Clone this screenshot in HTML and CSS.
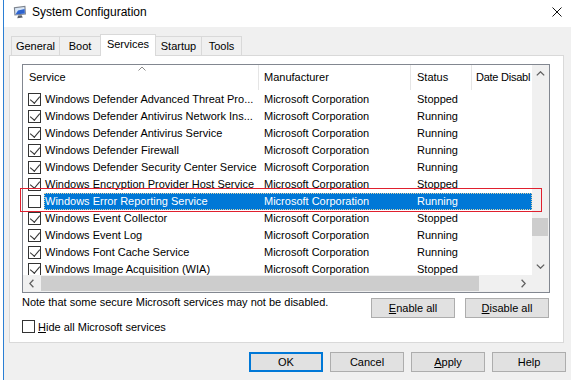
FILE: index.html
```html
<!DOCTYPE html>
<html>
<head>
<meta charset="utf-8">
<title>System Configuration</title>
<link rel="stylesheet" href="styles.css">
</head>
<body>
<div class="screen">
  <div class="behind"></div>
  <div class="dialog">
    <div class="titlebar">
      <svg class="appicon" width="14" height="14" viewBox="0 0 14 14">
        <path d="M0.8 2.2 L12.4 0.8 L13 9.4 L1.4 10.6 Z" fill="#7d838d"/>
        <path d="M2 3.2 L11.4 2.1 L11.8 8.4 L2.4 9.4 Z" fill="#d8e6f6"/>
        <path d="M5 5.5 L11.6 4 L11.8 8.4 L2.4 9.4 Z" fill="#2f64cf"/>
        <path d="M5.2 10.6 L8.6 10.2 L9.8 12.6 L4.2 13.2 Z" fill="#5b6068"/>
      </svg>
      <span class="title">System Configuration</span>
      <svg class="close" width="10" height="10" viewBox="0 0 10 10">
        <path d="M0.5 0.5 L9.5 9.5 M9.5 0.5 L0.5 9.5" stroke="#111" stroke-width="1" fill="none"/>
      </svg>
    </div>

    <div class="tabs">
      <div class="tab t-general">General</div>
      <div class="tab t-boot">Boot</div>
      <div class="tab t-services active">Services</div>
      <div class="tab t-startup">Startup</div>
      <div class="tab t-tools">Tools</div>
    </div>

    <div class="panel">
      <div class="listview">
        <div class="lv-main">
          <div class="lv-header">
            <div class="hcell h1">Service</div>
            <div class="hcell h2">Manufacturer</div>
            <div class="hcell h3">Status</div>
            <div class="hcell h4">Date Disabl</div>
            <svg class="sort" width="8" height="5" viewBox="0 0 8 5"><polyline points="0.5,4.5 4,1 7.5,4.5" fill="none" stroke="#8a8a8a" stroke-width="1"/></svg>
          </div>
          <div class="lv-rows">
            <div class="row"><div class="chk-cell"><span class="chk on"></span></div><div class="cells"><span class="s1">Windows Defender Advanced Threat Pro...</span><span class="s2">Microsoft Corporation</span><span class="s3">Stopped</span></div></div>
            <div class="row"><div class="chk-cell"><span class="chk on"></span></div><div class="cells"><span class="s1">Windows Defender Antivirus Network Ins...</span><span class="s2">Microsoft Corporation</span><span class="s3">Running</span></div></div>
            <div class="row"><div class="chk-cell"><span class="chk on"></span></div><div class="cells"><span class="s1">Windows Defender Antivirus Service</span><span class="s2">Microsoft Corporation</span><span class="s3">Running</span></div></div>
            <div class="row"><div class="chk-cell"><span class="chk on"></span></div><div class="cells"><span class="s1">Windows Defender Firewall</span><span class="s2">Microsoft Corporation</span><span class="s3">Running</span></div></div>
            <div class="row"><div class="chk-cell"><span class="chk on"></span></div><div class="cells"><span class="s1">Windows Defender Security Center Service</span><span class="s2">Microsoft Corporation</span><span class="s3">Running</span></div></div>
            <div class="row"><div class="chk-cell"><span class="chk on"></span></div><div class="cells"><span class="s1">Windows Encryption Provider Host Service</span><span class="s2">Microsoft Corporation</span><span class="s3">Stopped</span></div></div>
            <div class="row"><div class="chk-cell"><span class="chk"></span></div><div class="cells sel"><span class="s1">Windows Error Reporting Service</span><span class="s2">Microsoft Corporation</span><span class="s3">Running</span></div></div>
            <div class="row"><div class="chk-cell"><span class="chk on"></span></div><div class="cells"><span class="s1">Windows Event Collector</span><span class="s2">Microsoft Corporation</span><span class="s3">Stopped</span></div></div>
            <div class="row"><div class="chk-cell"><span class="chk on"></span></div><div class="cells"><span class="s1">Windows Event Log</span><span class="s2">Microsoft Corporation</span><span class="s3">Running</span></div></div>
            <div class="row"><div class="chk-cell"><span class="chk on"></span></div><div class="cells"><span class="s1">Windows Font Cache Service</span><span class="s2">Microsoft Corporation</span><span class="s3">Running</span></div></div>
            <div class="row"><div class="chk-cell"><span class="chk on"></span></div><div class="cells"><span class="s1">Windows Image Acquisition (WIA)</span><span class="s2">Microsoft Corporation</span><span class="s3">Stopped</span></div></div>
          </div>
        </div>
        <div class="vscroll">
          <div class="arrow"><svg width="9" height="5" viewBox="0 0 9 5"><polyline points="0.8,4.4 4.5,0.8 8.2,4.4" fill="none" stroke="#606060" stroke-width="1.3"/></svg></div>
          <div class="vtrack"><div class="vthumb"></div></div>
          <div class="arrow"><svg width="9" height="5" viewBox="0 0 9 5"><polyline points="0.8,0.6 4.5,4.2 8.2,0.6" fill="none" stroke="#606060" stroke-width="1.3"/></svg></div>
        </div>
        <div class="hscroll">
          <div class="arrow"><svg width="5" height="9" viewBox="0 0 5 9"><polyline points="4.4,0.8 0.8,4.5 4.4,8.2" fill="none" stroke="#606060" stroke-width="1.3"/></svg></div>
          <div class="htrack"><div class="hthumb"></div></div>
          <div class="arrow"><svg width="5" height="9" viewBox="0 0 5 9"><polyline points="0.6,0.8 4.2,4.5 0.6,8.2" fill="none" stroke="#606060" stroke-width="1.3"/></svg></div>
        </div>
        <div class="corner"></div>
      </div>

      <div class="actions">
        <span class="note">Note that some secure Microsoft services may not be disabled.</span>
        <div class="act-buttons">
          <button class="btn wide"><u>E</u>nable all</button>
          <button class="btn wide"><u>D</u>isable all</button>
        </div>
      </div>

      <div class="hide-row">
        <span class="chk"></span>
        <span class="hide-label"><u>H</u>ide all Microsoft services</span>
      </div>
    </div>

    <div class="footer">
      <button class="btn dlg default">OK</button>
      <button class="btn dlg">Cancel</button>
      <button class="btn dlg"><u>A</u>pply</button>
      <button class="btn dlg">Help</button>
    </div>
  </div>
  <div class="rightgap"></div>
</div>
<div class="annot"></div>
</body>
</html>
```

FILE: styles.css
```css
* { box-sizing: border-box; }
html, body { margin: 0; padding: 0; }
body {
  width: 587px;
  height: 380px;
  overflow: hidden;
  position: relative;
  background: #ffffff;
  font-family: "Liberation Sans", Arial, sans-serif;
  font-size: 11px;
  color: #000;
}
.screen { display: flex; height: 380px; }
.behind { width: 4px; background: #fff; border-right: 1px solid #2b7fd4; }
.dialog {
  width: 567px;
  background: #f0f0f0;
  display: flex;
  flex-direction: column;
}
.rightgap { flex: 1; background: #fff; }

/* title bar */
.titlebar {
  height: 27px;
  background: #fff;
  display: flex;
  align-items: center;
  padding: 0 0 3px 9px;
}
.appicon { flex: none; }
.title { font-size: 12px; margin-left: 5px; flex: 1; color: #000; }
.close { margin-right: 9px; flex: none; }

/* tabs */
.tabs {
  height: 28px;
  display: flex;
  align-items: flex-end;
  padding-left: 7px;
}
.tab {
  height: 19px;
  line-height: 18px;
  text-align: center;
  border: 1px solid #d9d9d9;
  border-bottom: none;
  background: #f0f0f0;
  margin-left: -1px;
}
.tab:first-child { margin-left: 0; }
.t-general { width: 49px; }
.t-boot { width: 42px; }
.t-services { width: 56px; }
.t-startup { width: 47px; }
.t-tools { width: 41px; }
.tab.active {
  height: 22px;
  line-height: 19px;
  background: #fff;
  position: relative;
  z-index: 1;
  margin-bottom: -1px;
}

/* panel */
.panel {
  margin-left: 5px;
  width: 555px;
  height: 288px;
  background: #fff;
  border: 1px solid #d9d9d9;
  padding: 8px 13px 0 12px;
}

/* list view */
.listview {
  width: 528px;
  height: 229px;
  border: 1px solid #828790;
  display: grid;
  grid-template-columns: 1fr 17px;
  grid-template-rows: 1fr 17px;
}
.lv-main { overflow: hidden; position: relative; }
.lv-header { display: flex; height: 25px; position: relative; }
.hcell {
  line-height: 25px;
  white-space: nowrap;
  overflow: hidden;
}
.h1 { width: 236px; padding-left: 6px; border-right: 1px solid #e5e5e5; }
.h2 { width: 152px; padding-left: 5px; border-right: 1px solid #e5e5e5; }
.h3 { width: 61px; padding-left: 6px; border-right: 1px solid #e5e5e5; }
.h4 { flex: 1; padding-left: 4px; letter-spacing: -0.25px; }
.sort { position: absolute; left: 115px; top: 1px; }

.lv-rows { padding-top: 1px; }
.row { display: flex; height: 17px; line-height: 17px; white-space: nowrap; }
.chk-cell { width: 21px; padding-left: 5px; display: flex; align-items: center; flex: none; }
.cells { flex: 1; display: flex; }
.s1 { width: 214px; padding-left: 1px; overflow: hidden; }
.s2 { width: 152px; padding-left: 6px; }
.s3 { width: 61px; padding-left: 7px; }
.cells.sel {
  background: #0078d7;
  color: #fff;
  outline: 1px dotted rgba(255, 226, 160, 0.85);
  outline-offset: -1px;
}

/* checkbox */
.chk {
  display: inline-block;
  width: 13px;
  height: 13px;
  border: 1px solid #333;
  background: #fff;
  flex: none;
  position: relative;
}
.chk.on::after {
  content: "";
  position: absolute;
  left: 3px;
  top: 0px;
  width: 5px;
  height: 8px;
  border-right: 1px solid #333;
  border-bottom: 1px solid #333;
  transform: rotate(40deg);
  transform-origin: center;
}

/* scrollbars */
.vscroll {
  background: #f0f0f0;
  display: flex;
  flex-direction: column;
}
.vscroll .arrow { height: 17px; display: flex; align-items: center; justify-content: center; flex: none; }
.vtrack { flex: 1; }
.vthumb { margin: 136px 1px 0 0; height: 18px; background: #cdcdcd; }
.hscroll {
  background: #f0f0f0;
  display: flex;
}
.hscroll .arrow { width: 17px; display: flex; align-items: center; justify-content: center; flex: none; }
.htrack { flex: 1; }
.hthumb { margin: 1px 0 0 1px; width: 438px; height: 15px; background: #cdcdcd; }
.corner { background: #f0f0f0; }

/* actions */
.actions {
  margin-top: 5px;
  height: 20px;
  display: flex;
  align-items: flex-start;
}
.note { line-height: 13px; margin-top: -2px; white-space: nowrap; }
.act-buttons { margin-left: auto; display: flex; gap: 10px; padding-right: 1px; }
.btn {
  font-family: "Liberation Sans", Arial, sans-serif;
  font-size: 11px;
  color: #000;
  background: #e1e1e1;
  border: 1px solid #adadad;
  height: 20px;
  padding: 0;
  margin: 0;
  text-align: center;
}
.btn.wide { width: 84px; }
.hide-row {
  margin-top: 1px;
  height: 15px;
  display: flex;
  align-items: center;
  gap: 3px;
}

/* footer */
.footer {
  margin-top: 9px;
  display: flex;
  justify-content: flex-end;
  gap: 7px;
  padding-right: 5px;
}
.btn.dlg { width: 74px; height: 20px; }
.btn.default { border: 2px solid #0078d7; }

/* annotation overlay */
.annot {
  position: absolute;
  left: 20px;
  top: 188px;
  width: 522px;
  height: 24px;
  border: 1px solid #e0202e;
  pointer-events: none;
}
```
